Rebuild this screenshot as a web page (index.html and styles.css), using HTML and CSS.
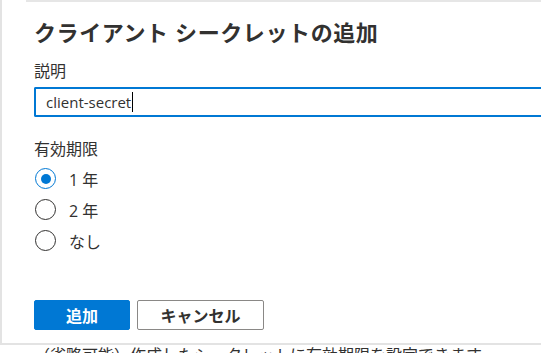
FILE: index.html
```html
<!DOCTYPE html>
<html lang="ja">
<head>
 <meta charset="UTF-8">
 <meta name="viewport" content="width=device-width, initial-scale=1.0">
 <title>クライアント シークレットの追加</title>
 <link rel="stylesheet" href="styles.css">
</head>
<body>
 <div class="panel">
 <div class="topline"></div>
 <div class="content">
 <h1 class="title">クライアント シークレットの追加</h1>
 <div class="field-label">説明</div>
 <div class="text-input"><span class="caret">client-secret</span></div>
 <div class="field-label group-label">有効期限</div>
 <div class="radio-list">
 <div class="radio"><span class="radio-mark checked"></span>1 年</div>
 <div class="radio"><span class="radio-mark"></span>2 年</div>
 <div class="radio"><span class="radio-mark"></span>なし</div>
 </div>
 <div class="actions">
 <button class="btn btn-primary">追加</button>
 <button class="btn">キャンセル</button>
 </div>
 </div>
 </div>
 <p class="below">（省略可能）作成したシークレットに有効期限を設定できます。</p>
</body>
</html>
```

FILE: styles.css
```css
body {
margin: 0;
padding: 0;
background-color: #fff;
color: #323130;
font-family: 'Open Sans', 'Noto Sans CJK JP', sans-serif;
overflow: hidden;
}
.panel {
border-left: 2px solid #e3e3e3;
border-bottom: 2px solid #e3e3e3;
height: 345px;
box-sizing: border-box;
}
.topline {
height: 2px;
margin-left: 24px;
background-color: #e6e6e6;
}
.content {
padding-left: 32px;
}
.title {
margin: 16px 0 0;
font-size: 22px;
line-height: 28px;
font-weight: 700;
letter-spacing: 0.6px;
}
.field-label {
margin-top: 14px;
font-size: 16px;
line-height: 22px;
}
.group-label {
margin-top: 21px;
}
.text-input {
margin-top: 5px;
height: 30px;
box-sizing: border-box;
border: 2px solid #0078d4;
border-right: none;
border-radius: 2px 0 0 2px;
padding-left: 10px;
font-size: 15px;
line-height: 26px;
}
.caret {
border-right: 1px solid #000;
padding-right: 1px;
}
.radio-list {
margin-top: 3px;
}
.radio {
display: flex;
align-items: center;
height: 31px;
font-size: 16px;
}
.radio-mark {
width: 21px;
height: 21px;
box-sizing: border-box;
border: 1px solid #323130;
border-radius: 50%;
margin: 0 13px 0 1px;
display: flex;
align-items: center;
justify-content: center;
}
.radio-mark.checked {
border-color: #0078d4;
}
.radio-mark.checked::after {
content: '';
width: 10px;
height: 10px;
border-radius: 50%;
background-color: #0078d4;
}
.actions {
display: flex;
gap: 7px;
margin-top: 44px;
}
.btn {
height: 30px;
box-sizing: border-box;
border: 1px solid #8a8886;
border-radius: 2px;
background-color: #fff;
color: #323130;
font-family: inherit;
font-size: 16px;
font-weight: 700;
width: 127px;
padding: 0;
}
.btn-primary {
width: 96px;
background-color: #0078d4;
border-color: #0078d4;
color: #fff;
}
.below {
margin: 0;
padding-left: 34px;
font-size: 16px;
line-height: 20px;
margin-top: 0;
}
```
